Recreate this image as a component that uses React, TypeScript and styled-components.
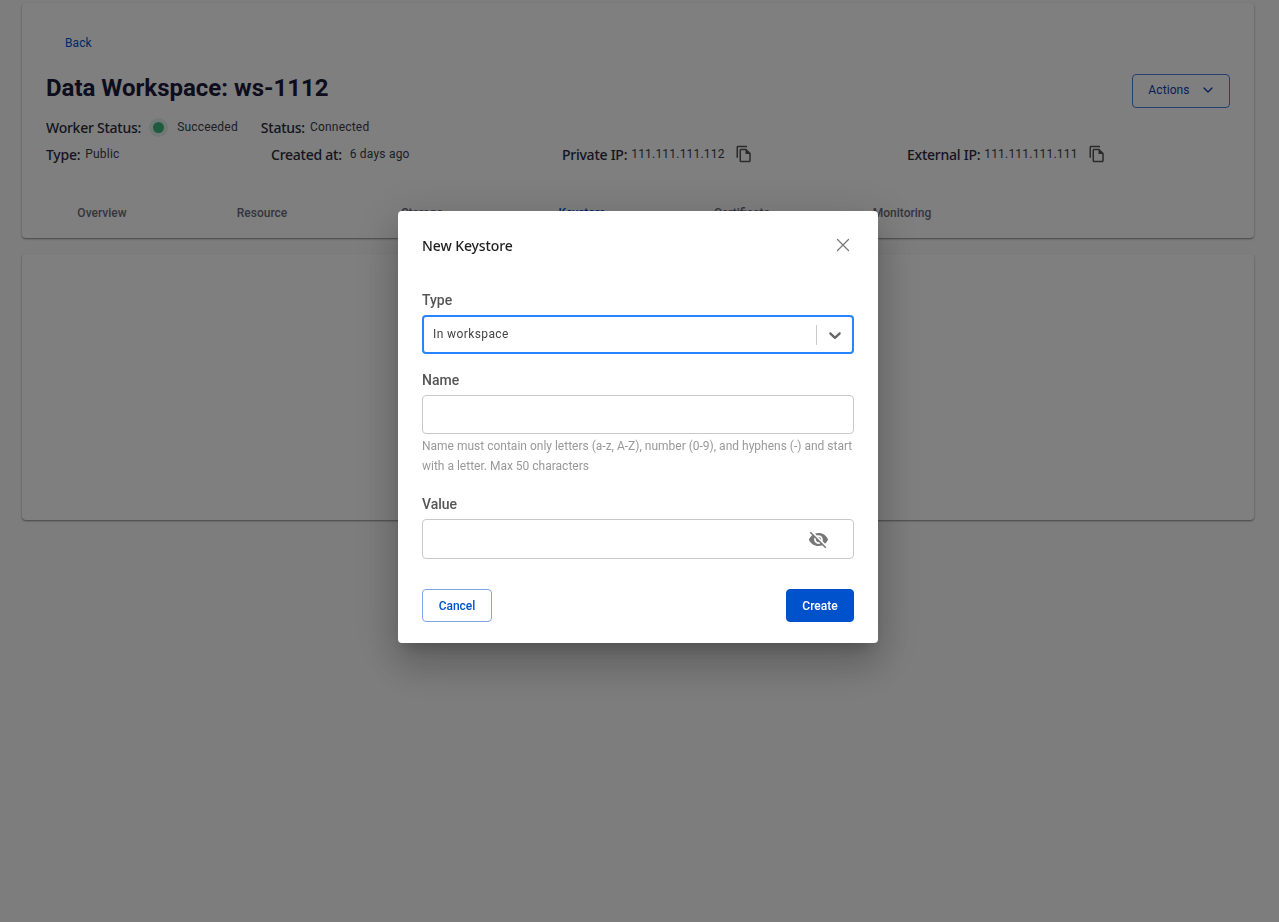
import React from 'react'
import styled, { createGlobalStyle } from 'styled-components'
import { MdOutlineFileCopy, MdVisibilityOff } from 'react-icons/md'
import { ChevronDown, X } from 'lucide-react'

const GlobalStyle = createGlobalStyle`
  html, body {
    margin: 0;
    padding: 0;
    background: #fafafa;
    font-family: Roboto, "Liberation Sans", sans-serif;
  }
  * {
    box-sizing: border-box;
  }
`

const Page = styled.div`
  height: 922px;
  padding: 3px 25px 0 22px;
  display: flex;
  flex-direction: column;
  gap: 16px;
  overflow: hidden;
`

const Card = styled.section<{ $height: number }>`
  height: ${(p) => p.$height}px;
  background: #fff;
  border-radius: 4px;
  box-shadow: 0 1px 2px rgba(0, 0, 0, 0.45);
`

const Header = styled.div`
  height: 190px;
  padding: 32px 24px 0 24px;
  display: flex;
  flex-direction: column;
`

const BackLink = styled.a`
  margin-left: 19px;
  font-size: 12px;
  line-height: 16px;
  font-weight: 400;
  letter-spacing: 0.1px;
  color: #0052cc;
`

const TitleRow = styled.div`
  margin-top: 16px;
  height: 42px;
  display: flex;
  justify-content: space-between;
  align-items: center;
`

const Title = styled.h1`
  margin: 0;
  font-size: 24px;
  line-height: 32px;
  font-weight: 700;
  color: #1a1a3c;
`

const ActionsButton = styled.button`
  width: 98px;
  height: 34px;
  margin-top: 6px;
  padding: 0 0 2px 2px;
  border: 1px solid #4c7fe0;
  border-radius: 4px;
  background: transparent;
  color: #0c3fb0;
  font: 400 12px Roboto, sans-serif;
  letter-spacing: 0.1px;
  display: flex;
  align-items: center;
  justify-content: center;
  gap: 10px;
`

const StatusRow = styled.div`
  margin-top: 5px;
  height: 26px;
  display: flex;
  align-items: center;
`

const InfoRow = styled.div`
  margin-top: 1px;
  height: 26px;
  display: grid;
  grid-template-columns: 225px 291px 345px 1fr;
  align-items: center;
`

const Item = styled.div<{ $gap?: number; $offset?: number }>`
  display: flex;
  align-items: center;
  gap: ${(p) => p.$gap ?? 4}px;
  margin-left: ${(p) => p.$offset ?? 0}px;
`

const Label = styled.span`
  font-family: "Noto Sans", sans-serif;
  font-size: 14px;
  font-weight: 500;
  letter-spacing: -0.25px;
  color: #2a2a3c;
`

const Value = styled.span`
  font-size: 12px;
  color: #3a3a4c;
  letter-spacing: 0.2px;
`

const Dot = styled.span`
  width: 11px;
  height: 11px;
  margin: 0 13px 0 12px;
  border-radius: 50%;
  background: #3fb57c;
  box-shadow: 0 0 0 4px rgba(63, 181, 124, 0.16);
`

const CopyIcon = styled(MdOutlineFileCopy)`
  width: 18px;
  height: 18px;
  margin-left: 6px;
  color: #555;
`

const Tabs = styled.nav`
  display: flex;
  height: 45px;
`

const Tab = styled.div<{ $active?: boolean }>`
  width: 160px;
  padding-top: 13px;
  text-align: center;
  font-size: 12px;
  line-height: 14px;
  font-weight: 500;
  color: ${(p) => (p.$active ? '#0052cc' : '#6b6b80')};
`

const Overlay = styled.div`
  position: fixed;
  inset: 0;
  background: rgba(0, 0, 0, 0.5);
  backdrop-filter: blur(0.6px);
  display: flex;
  justify-content: center;
  align-items: flex-start;
  padding: 211px 3px 0 0;
`

const Modal = styled.div`
  width: 480px;
  padding: 24px 24px 21px;
  background: #fff;
  border-radius: 4px;
  box-shadow: 0 11px 15px -7px rgba(0, 0, 0, 0.2), 0 24px 38px 3px rgba(0, 0, 0, 0.14), 0 9px 46px 8px rgba(0, 0, 0, 0.12);
  display: flex;
  flex-direction: column;
`

const ModalHeader = styled.div`
  height: 20px;
  display: flex;
  align-items: center;
  justify-content: space-between;
`

const ModalTitle = styled.h2`
  margin: 0;
  font-family: "Noto Sans", sans-serif;
  font-size: 14px;
  font-weight: 500;
  letter-spacing: -0.1px;
  color: #1f1f1f;
`

const CloseIcon = styled(X)`
  width: 22px;
  height: 22px;
  color: #777;
`

const FieldLabel = styled.label<{ $top: number }>`
  display: block;
  margin-top: ${(p) => p.$top}px;
  margin-bottom: 5px;
  font-size: 14px;
  line-height: 20px;
  font-weight: 500;
  color: #555;
`

const Select = styled.div`
  height: 39px;
  padding: 0 7px 0 9px;
  border: 2px solid #2684ff;
  border-radius: 4px;
  display: flex;
  align-items: center;
  font-size: 12px;
  color: #444;
  letter-spacing: 0.4px;
`

const SelectText = styled.span`
  flex: 1;
  padding-bottom: 2px;
`

const Separator = styled.span`
  width: 1px;
  height: 20px;
  margin-right: 8px;
  background: #ccc;
`

const Field = styled.div<{ $height: number }>`
  height: ${(p) => p.$height}px;
  padding-right: 24px;
  border: 1px solid #c8c8c8;
  border-radius: 4px;
  display: flex;
  align-items: center;
  justify-content: flex-end;
`

const EyeIcon = styled(MdVisibilityOff)`
  width: 21px;
  height: 21px;
  margin-top: 1px;
  color: #777;
`

const Hint = styled.p`
  margin: 2px 0 0;
  font-size: 12px;
  line-height: 20px;
  color: #999;
`

const Footer = styled.div`
  margin-top: 30px;
  display: flex;
  justify-content: space-between;
`

const DialogButton = styled.button<{ $primary?: boolean }>`
  width: ${(p) => (p.$primary ? 68 : 70)}px;
  height: 33px;
  border: 1px solid ${(p) => (p.$primary ? '#0052cc' : '#82a2ea')};
  border-radius: 4px;
  background: ${(p) => (p.$primary ? '#0052cc' : '#fff')};
  color: ${(p) => (p.$primary ? '#fff' : '#0052cc')};
  font: 500 12px Roboto, sans-serif;
`

const tabs = ['Overview', 'Resource', 'Storage', 'Keystore', 'Certificate', 'Monitoring']

const App: React.FC = () => {
  return (
    <>
      <GlobalStyle />
      <Page>
        <Card $height={235}>
          <Header>
            <BackLink>Back</BackLink>
            <TitleRow>
              <Title>Data Workspace: ws-1112</Title>
              <ActionsButton>
                Actions
                <ChevronDown size={16} />
              </ActionsButton>
            </TitleRow>
            <StatusRow>
              <Label>Worker Status:</Label>
              <Dot />
              <Value>Succeeded</Value>
              <Item $offset={23} $gap={5}>
                <Label>Status:</Label>
                <Value>Connected</Value>
              </Item>
            </StatusRow>
            <InfoRow>
              <Item $gap={5}>
                <Label>Type:</Label>
                <Value>Public</Value>
              </Item>
              <Item $gap={8}>
                <Label>Created at:</Label>
                <Value>6 days ago</Value>
              </Item>
              <Item>
                <Label>Private IP:</Label>
                <Value>111.111.111.112</Value>
                <CopyIcon />
              </Item>
              <Item>
                <Label>External IP:</Label>
                <Value>111.111.111.111</Value>
                <CopyIcon />
              </Item>
            </InfoRow>
          </Header>
          <Tabs>
            {tabs.map((t) => (
              <Tab key={t} $active={t === 'Keystore'}>
                {t}
              </Tab>
            ))}
          </Tabs>
        </Card>
        <Card $height={266} />
      </Page>
      <Overlay>
        <Modal>
          <ModalHeader>
            <ModalTitle>New Keystore</ModalTitle>
            <CloseIcon strokeWidth={1.3} />
          </ModalHeader>
          <FieldLabel $top={35}>Type</FieldLabel>
          <Select>
            <SelectText>In workspace</SelectText>
            <Separator />
            <svg width="20" height="20" viewBox="0 0 20 20" fill="#666">
              <path d="M4.516 7.548c0.436-0.446 1.043-0.481 1.576 0l3.908 3.747 3.908-3.747c0.533-0.481 1.141-0.446 1.574 0 0.436 0.445 0.408 1.197 0 1.615-0.406 0.418-4.695 4.502-4.695 4.502-0.217 0.223-0.502 0.335-0.787 0.335s-0.57-0.112-0.789-0.335c0 0-4.287-4.084-4.695-4.502s-0.436-1.17 0-1.615z" />
            </svg>
          </Select>
          <FieldLabel $top={16}>Name</FieldLabel>
          <Field $height={39} />
          <Hint>
            Name must contain only letters (a-z, A-Z), number (0-9), and hyphens (-) and start with a letter. Max 50
            characters
          </Hint>
          <FieldLabel $top={18}>Value</FieldLabel>
          <Field $height={40}>
            <EyeIcon />
          </Field>
          <Footer>
            <DialogButton>Cancel</DialogButton>
            <DialogButton $primary>Create</DialogButton>
          </Footer>
        </Modal>
      </Overlay>
    </>
  )
}

export default App
